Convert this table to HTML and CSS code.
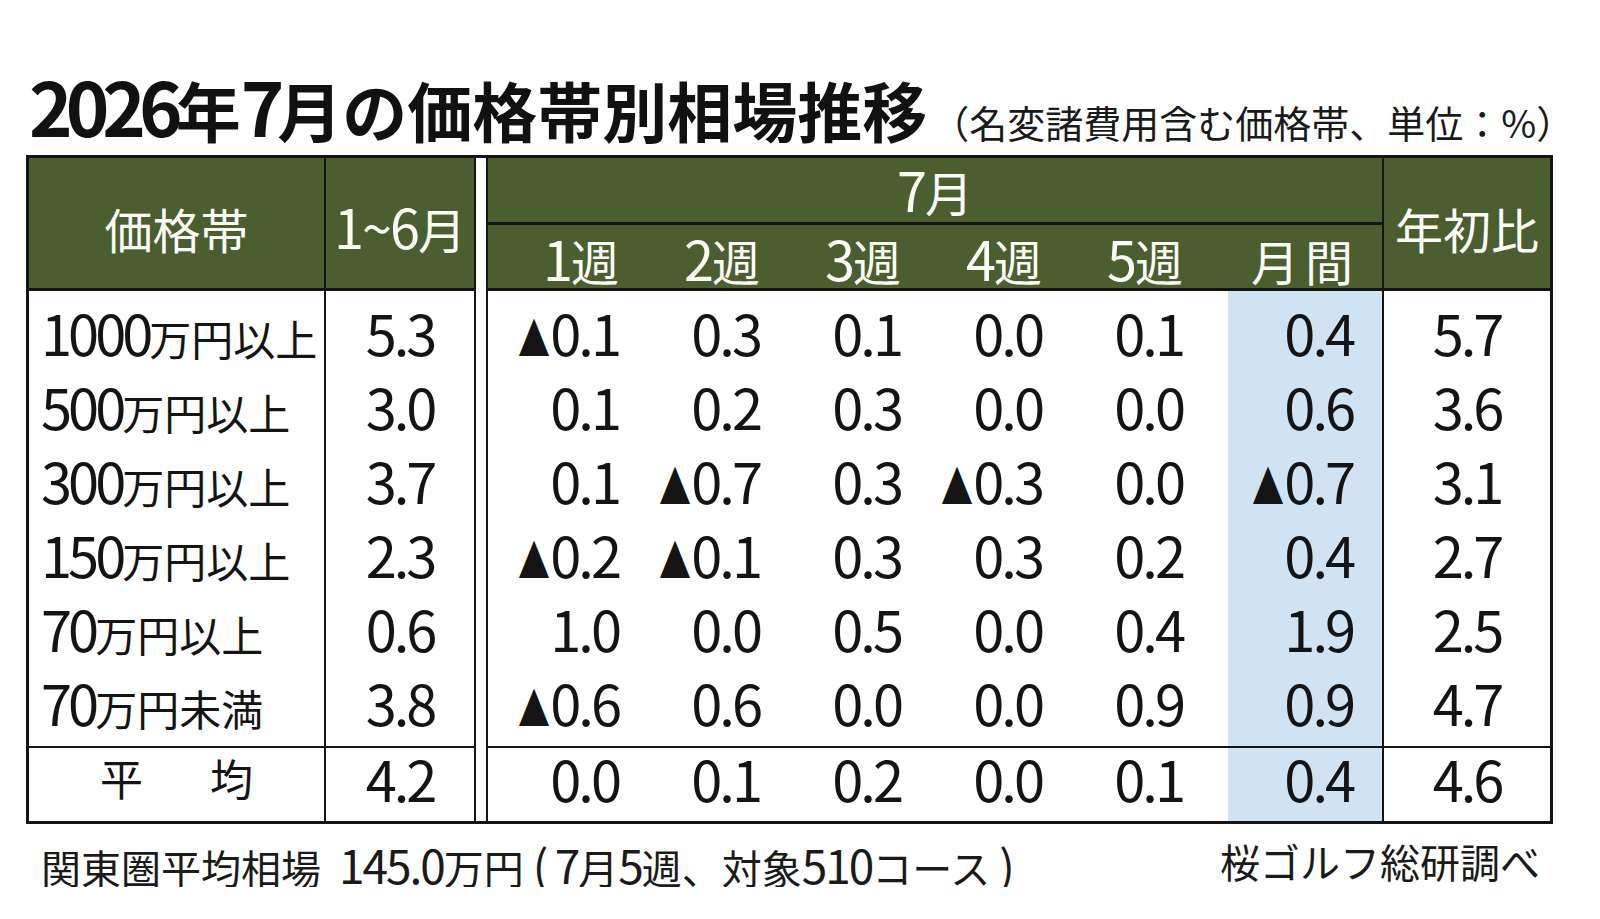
FILE: index.html
```html
<!DOCTYPE html>
<html lang="ja">
<head>
<meta charset="utf-8">
<title>2026年7月の価格帯別相場推移</title>
<link rel="stylesheet" href="styles.css">
</head>
<body>
<div class="page">
  <div class="titlebar">
    <h1 class="title"><span class="n">2026</span>年<span class="n">7</span>月の価格帯別相場推移</h1>
    <span class="unit">（名変諸費用含む価格帯、単位：%）</span>
  </div>
  <table class="market">
    <colgroup>
      <col class="k-band"><col class="k-half"><col class="k-gap"><col class="k-w1"><col class="k-w"><col class="k-w"><col class="k-w"><col class="k-w5"><col class="k-month"><col class="k-ytd">
    </colgroup>
    <thead>
      <tr class="h1">
        <th rowspan="2" class="cb hb">価格帯</th>
        <th rowspan="2" class="ch hb"><span class="n">1~6</span>月</th>
        <th rowspan="2" class="cg"></th>
        <th colspan="6" class="july"><span class="n">7</span>月</th>
        <th rowspan="2" class="cy hb">年初比</th>
      </tr>
      <tr class="h2">
        <th class="cw1 hb"><span class="n">1</span>週</th>
        <th class="cw hb"><span class="n">2</span>週</th>
        <th class="cw hb"><span class="n">3</span>週</th>
        <th class="cw hb"><span class="n">4</span>週</th>
        <th class="cw5 hb"><span class="n">5</span>週</th>
        <th class="cm hb month-head">月間</th>
      </tr>
    </thead>
    <tbody>
      <tr class="first">
        <th scope="row" class="cb"><span class="n">1000</span>万円以上</th>
        <td class="ch">5.3</td>
        <td class="cg" rowspan="7"></td>
        <td class="cw1"><span class="tri">▲</span>0.1</td>
        <td class="cw">0.3</td>
        <td class="cw">0.1</td>
        <td class="cw">0.0</td>
        <td class="cw5">0.1</td>
        <td class="cm">0.4</td>
        <td class="cy">5.7</td>
      </tr>
      <tr>
        <th scope="row" class="cb"><span class="n">500</span>万円以上</th>
        <td class="ch">3.0</td>
        <td class="cw1">0.1</td>
        <td class="cw">0.2</td>
        <td class="cw">0.3</td>
        <td class="cw">0.0</td>
        <td class="cw5">0.0</td>
        <td class="cm">0.6</td>
        <td class="cy">3.6</td>
      </tr>
      <tr>
        <th scope="row" class="cb"><span class="n">300</span>万円以上</th>
        <td class="ch">3.7</td>
        <td class="cw1">0.1</td>
        <td class="cw"><span class="tri">▲</span>0.7</td>
        <td class="cw">0.3</td>
        <td class="cw"><span class="tri">▲</span>0.3</td>
        <td class="cw5">0.0</td>
        <td class="cm"><span class="tri">▲</span>0.7</td>
        <td class="cy">3.1</td>
      </tr>
      <tr>
        <th scope="row" class="cb"><span class="n">150</span>万円以上</th>
        <td class="ch">2.3</td>
        <td class="cw1"><span class="tri">▲</span>0.2</td>
        <td class="cw"><span class="tri">▲</span>0.1</td>
        <td class="cw">0.3</td>
        <td class="cw">0.3</td>
        <td class="cw5">0.2</td>
        <td class="cm">0.4</td>
        <td class="cy">2.7</td>
      </tr>
      <tr>
        <th scope="row" class="cb"><span class="n">70</span>万円以上</th>
        <td class="ch">0.6</td>
        <td class="cw1">1.0</td>
        <td class="cw">0.0</td>
        <td class="cw">0.5</td>
        <td class="cw">0.0</td>
        <td class="cw5">0.4</td>
        <td class="cm">1.9</td>
        <td class="cy">2.5</td>
      </tr>
      <tr>
        <th scope="row" class="cb"><span class="n">70</span>万円未満</th>
        <td class="ch">3.8</td>
        <td class="cw1"><span class="tri">▲</span>0.6</td>
        <td class="cw">0.6</td>
        <td class="cw">0.0</td>
        <td class="cw">0.0</td>
        <td class="cw5">0.9</td>
        <td class="cm">0.9</td>
        <td class="cy">4.7</td>
      </tr>
      <tr class="avg">
        <th scope="row" class="cb avg-label">平　均</th>
        <td class="ch">4.2</td>
        <td class="cw1">0.0</td>
        <td class="cw">0.1</td>
        <td class="cw">0.2</td>
        <td class="cw">0.0</td>
        <td class="cw5">0.1</td>
        <td class="cm">0.4</td>
        <td class="cy">4.6</td>
      </tr>
    </tbody>
  </table>
  <div class="note">
    <span class="note-left">関東圏平均相場&nbsp;&nbsp;<span class="n">145.0</span>万円&nbsp;<span class="n">(&nbsp;7</span>月<span class="n">5</span>週、対象<span class="n">510</span>コース&nbsp;<span class="n">)</span></span>
    <span class="note-right">桜ゴルフ総研調べ</span>
  </div>
</div>
</body>
</html>
```
FILE: styles.css
```css
html, body {
  margin: 0;
  padding: 0;
  background: #ffffff;
}

body {
  color: #141414;
  font-family: "Noto Sans CJK JP", "Noto Sans", sans-serif;
}

.page {
  width: 1527px;
  padding: 78px 0 0 26px;
}

/* title */
.titlebar {
  display: flex;
  align-items: flex-end;
  height: 64px;
  margin-bottom: 13px;
  white-space: nowrap;
}

.title {
  margin: 0;
  padding-left: 3px;
  font-size: 65px;
  line-height: 64px;
  font-weight: 700;
  color: #111;
}

.title .n {
  font-size: 74px;
  line-height: 1;
  letter-spacing: -7px;
}

.unit {
  margin-left: 4px;
  margin-bottom: 1px;
  font-size: 38px;
  line-height: 38px;
  color: #1a1a1a;
}

/* table */
.market {
  width: 1527px;
  box-sizing: border-box;
  border-collapse: separate;
  border-spacing: 0;
  table-layout: fixed;
  border: 3px solid #141414;
}

.k-band { width: 297px; }
.k-half { width: 150px; }
.k-gap { width: 10px; }
.k-w1 { width: 163px; }
.k-w { width: 141px; }
.k-w5 { width: 156px; }
.k-month { width: 156px; }
.k-ytd { width: 166px; }

.market th,
.market td {
  padding: 0;
  box-sizing: border-box;
  vertical-align: middle;
}

.market thead th {
  background: #4a5e30;
  color: #fbfbf6;
  font-weight: 400;
  font-size: 48px;
  line-height: 56px;
  text-align: center;
}

.market thead th .n {
  font-size: 54px;
  line-height: 1;
  letter-spacing: -2px;
}

.market .cg {
  background: #ffffff;
}

.h1 { height: 67px; }
.h2 { height: 65px; }

.hb {
  border-bottom: 3px solid #141414;
}

.market thead th[rowspan] {
  padding-top: 9px;
}

.market thead th.cg {
  padding: 0;
}

.h2 th {
  padding-top: 6px;
}

.july {
  border-left: 2px solid #141414;
  border-right: 2px solid #141414;
  border-bottom: 3px solid #141414;
}

.cb { border-right: 2px solid #141414; }
.ch { border-right: 2px solid #141414; }
.cw1 { border-left: 2px solid #141414; }
.cm { border-right: 2px solid #141414; }

.market .cw1,
.market .cw {
  text-align: right;
  padding-right: 30px;
}

.market .cw5 {
  text-align: right;
  padding-right: 45px;
}

.market .cm {
  text-align: right;
  padding-right: 29px;
}

.market .month-head {
  letter-spacing: 6px;
  padding-right: 23px;
}

.market .ch,
.market .cy {
  text-align: center;
}

/* body */
.market tbody tr { height: 74px; }
.market tbody tr.first { height: 85px; }
.market tbody tr.avg { height: 75px; }

.market tbody th,
.market tbody td {
  padding-bottom: 14px;
}

.market tbody tr.first > * {
  padding-top: 10px;
}

.market tbody th {
  text-align: left;
  padding-left: 12px;
  font-weight: 400;
  font-size: 42px;
  line-height: 1;
  white-space: nowrap;
}

.market tbody th .n {
  font-size: 56px;
  letter-spacing: -4px;
}

.market tbody td {
  font-size: 56px;
  line-height: 1;
  letter-spacing: -3px;
  color: #141414;
}

.market tbody td.cm {
  background: #cfe3f3;
}

.market tbody tr.avg > th,
.market tbody tr.avg > td {
  border-top: 2px solid #141414;
}

.market tbody th.avg-label {
  text-align: center;
  padding-left: 12px;
  letter-spacing: 12px;
  font-size: 43px;
}

.tri {
  display: inline-block;
  font-size: 40px;
  letter-spacing: 0;
  transform: scale(0.8, 1.15);
  transform-origin: 100% 85%;
}

/* footer */
.note {
  display: flex;
  justify-content: space-between;
  margin-top: 17px;
  padding: 0 13px 0 15px;
  font-size: 40px;
  line-height: 40px;
  white-space: nowrap;
  color: #1a1a1a;
}

.note .n {
  font-size: 46px;
  line-height: 1;
  letter-spacing: -2px;
}
```
